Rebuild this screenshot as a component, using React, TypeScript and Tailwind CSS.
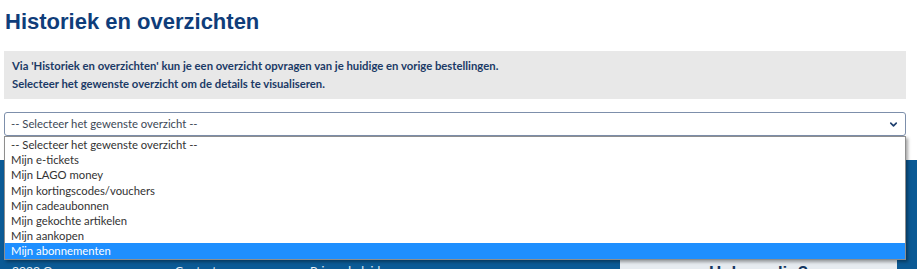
import { ChevronDown } from "lucide-react";

const OPTIONS = [
  "-- Selecteer het gewenste overzicht --",
  "Mijn e-tickets",
  "Mijn LAGO money",
  "Mijn kortingscodes/vouchers",
  "Mijn cadeaubonnen",
  "Mijn gekochte artikelen",
  "Mijn aankopen",
  "Mijn abonnementen",
];

export default function App() {
  return (
    <div className="relative w-[917px] h-[269px] overflow-hidden bg-white font-['Lato',sans-serif]">
      <div className="px-[4px] pt-[8px]">
        <h1 className="pl-[1px] text-[22px] leading-[28px] font-bold text-[#0f3d7a] font-['Liberation_Sans',Arial,sans-serif]">
          Historiek en overzichten
        </h1>

        <div className="mt-[15px] w-[902px] h-[48px] bg-[#e8e8e8] px-[8px] pt-[6px] text-[11.3px] leading-[18px] font-bold text-[#1b3a66]">
          <p>Via 'Historiek en overzichten' kun je een overzicht opvragen van je huidige en vorige bestellingen.</p>
          <p>Selecteer het gewenste overzicht om de details te visualiseren.</p>
        </div>

        <div className="mt-[13px] w-[902px] h-[24px] flex items-center justify-between border border-[#7d8fab] rounded-[3px] pl-[6px] pr-[6px] text-[11.3px] text-[#3c4856]">
          <span>-- Selecteer het gewenste overzicht --</span>
          <ChevronDown size={11} strokeWidth={3.5} className="text-[#1f3f6e]" />
        </div>
      </div>

      <footer className="mt-[24px] h-[120px] bg-[#0b5a95] flex">
        <div className="flex-1 flex pl-[12px] pt-[102px] text-[12px] text-white/90">
          <span className="w-[163px]">2023 Ocean</span>
          <span className="w-[135px]">Contact</span>
          <span>Privacybeleid</span>
        </div>
        <div className="mr-[20px] mt-[97px] w-[277px] bg-[#e6ebf0] text-center">
          <p className="pt-[3px] text-[17px] font-bold text-[#14365f] font-['Liberation_Sans',Arial,sans-serif]">Hulp nodig?</p>
        </div>
      </footer>

      <ul className="absolute left-[4px] top-[136px] w-[902px] bg-white border border-[#8e8e8e] shadow-[2px_2px_3px_rgba(0,0,0,0.35)] text-[11.3px] leading-[15.2px] text-[#333333]">
        {OPTIONS.map((o, i) => (
          <li
            key={o}
            className={`pl-[6px] ${i === OPTIONS.length - 1 ? "bg-[#1e8fff] text-white" : ""}`}
          >
            {o}
          </li>
        ))}
      </ul>
    </div>
  );
}
